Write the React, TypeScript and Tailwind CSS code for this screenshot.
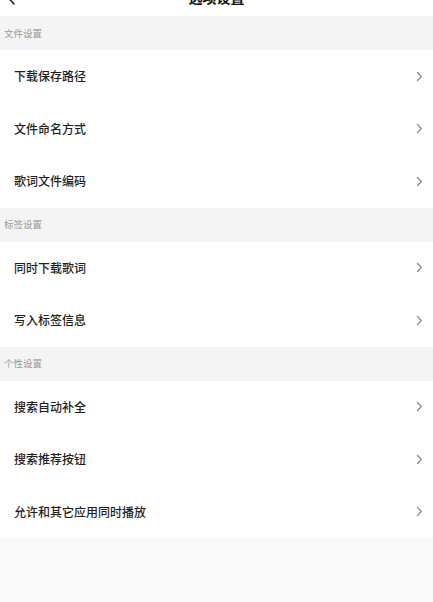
import React from "react";

const font = { fontFamily: '"Noto Sans CJK SC", "Noto Sans", sans-serif' };

function Chevron() {
  return (
    <svg width="7" height="11" viewBox="0 0 7 11" className="shrink-0">
      <polyline points="1.5,1.5 5.3,5.5 1.5,9.5" fill="none" stroke="#8a8a8a" strokeWidth="1.3" strokeLinecap="round" strokeLinejoin="round" />
    </svg>
  );
}

function Section({ title }: { title: string }) {
  return (
    <div className="h-[34px] flex items-center pl-[4px] bg-[#f4f4f4] text-[9.5px] text-[#9a9a9a]">
      {title}
    </div>
  );
}

function Row({ label }: { label: string }) {
  return (
    <div className="h-[52.5px] flex items-center justify-between pl-[14px] pr-[10px] bg-white">
      <span className="text-[12px] font-medium text-[#1e1e1e]">{label}</span>
      <Chevron />
    </div>
  );
}

export default function App() {
  return (
    <div className="w-[433px] h-[602px] overflow-hidden bg-[#f9f9f9] flex flex-col" style={font}>
      <div className="relative h-[38px] mt-[-22px] bg-white flex items-center justify-center shrink-0">
        <svg width="10" height="16" viewBox="0 0 10 16" className="absolute left-[6px] top-[11px]">
          <polyline points="8,1 1.5,8 8,15" fill="none" stroke="#222" strokeWidth="1.6" strokeLinecap="round" strokeLinejoin="round" />
        </svg>
        <span className="text-[14px] font-bold text-[#111]">选项设置</span>
      </div>
      <Section title="文件设置" />
      <Row label="下载保存路径" />
      <Row label="文件命名方式" />
      <Row label="歌词文件编码" />
      <Section title="标签设置" />
      <Row label="同时下载歌词" />
      <Row label="写入标签信息" />
      <Section title="个性设置" />
      <Row label="搜索自动补全" />
      <Row label="搜索推荐按钮" />
      <Row label="允许和其它应用同时播放" />
    </div>
  );
}
